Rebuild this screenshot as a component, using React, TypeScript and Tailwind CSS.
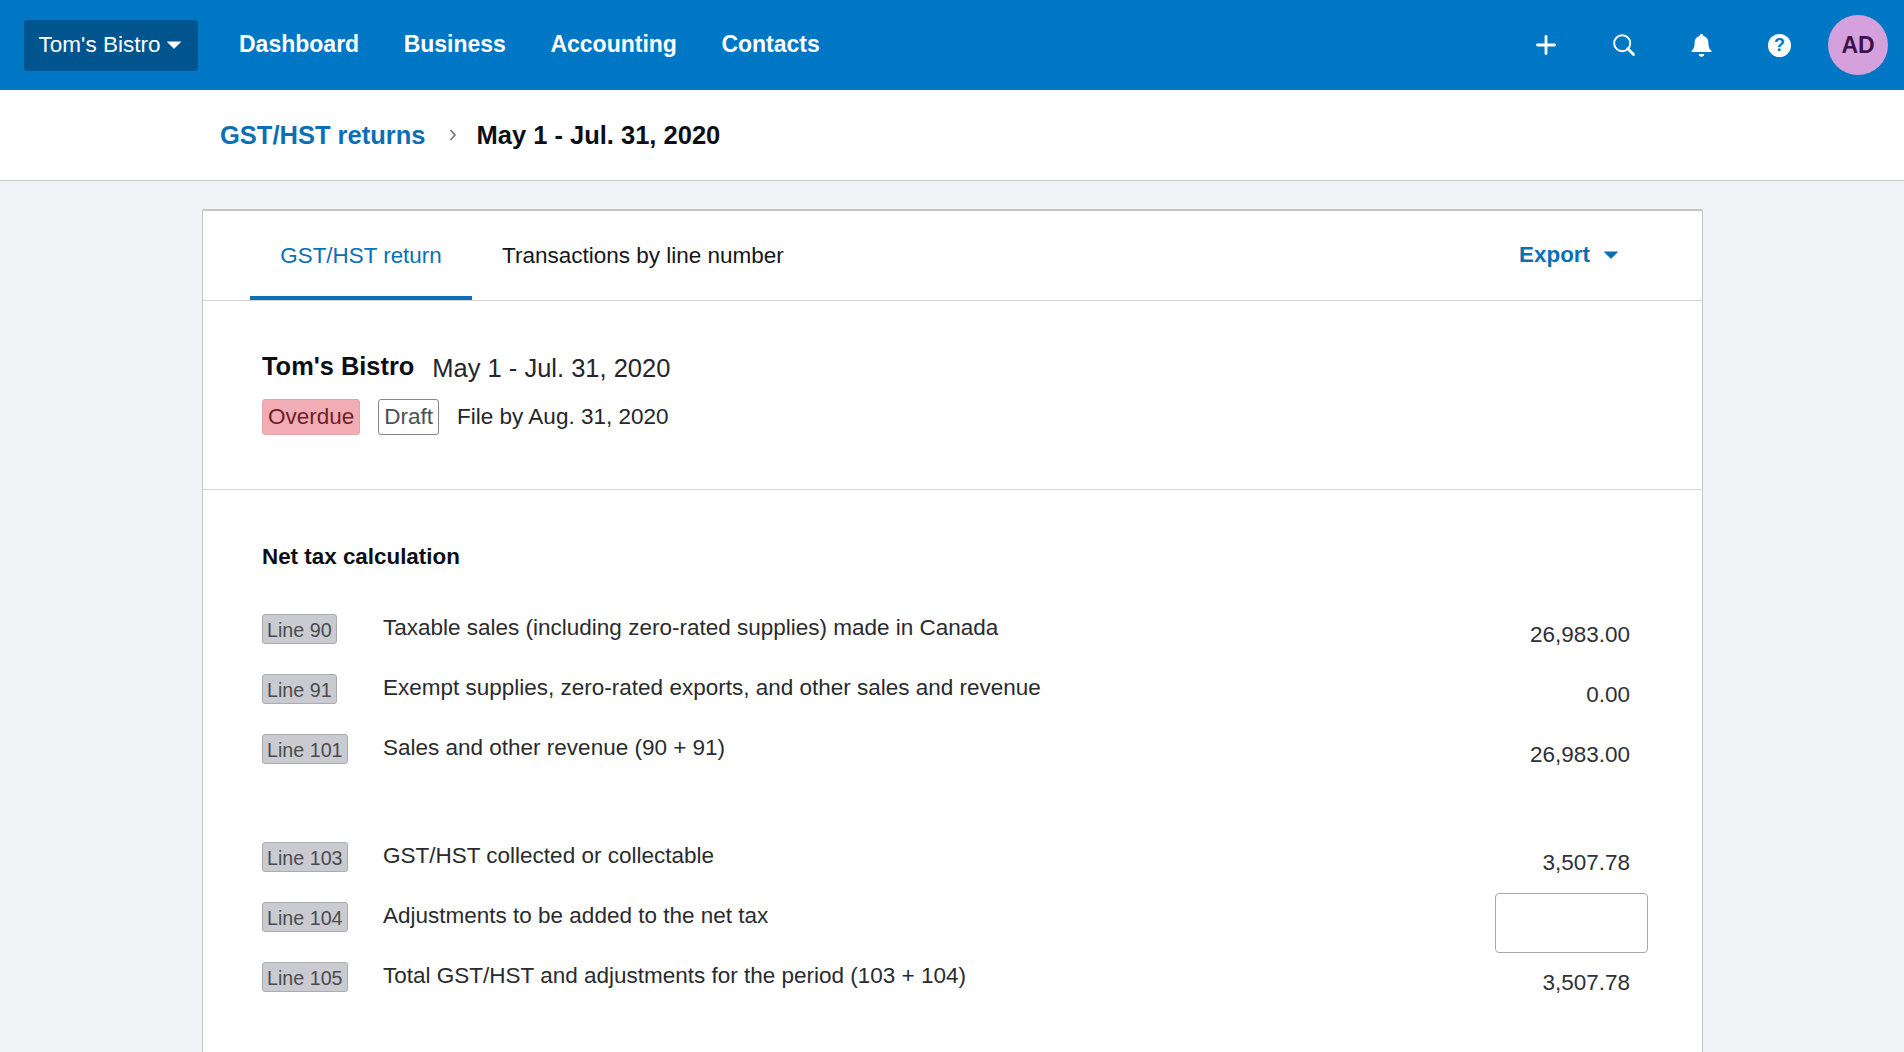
interface TaxLine {
  line: string;
  label: string;
  value?: string;
}

const firstGroup: TaxLine[] = [
  { line: "Line 90", label: "Taxable sales (including zero-rated supplies) made in Canada", value: "26,983.00" },
  { line: "Line 91", label: "Exempt supplies, zero-rated exports, and other sales and revenue", value: "0.00" },
  { line: "Line 101", label: "Sales and other revenue (90 + 91)", value: "26,983.00" },
];

const secondGroup: TaxLine[] = [
  { line: "Line 103", label: "GST/HST collected or collectable", value: "3,507.78" },
  { line: "Line 104", label: "Adjustments to be added to the net tax" },
  { line: "Line 105", label: "Total GST/HST and adjustments for the period (103 + 104)", value: "3,507.78" },
];

function Caret({ className }: { className: string }) {
  return (
    <svg viewBox="0 0 14 8" className={className} fill="currentColor">
      <path d="M0.6 0.5h12.8a0.5 0.5 0 0 1 0.35 0.85L7.4 7.5a0.6 0.6 0 0 1-0.8 0L0.25 1.35A0.5 0.5 0 0 1 0.6 0.5z" />
    </svg>
  );
}

function Row({ item }: { item: TaxLine }) {
  return (
    <div className="flex h-[60px] items-start">
      <div className="w-[121px] shrink-0 pt-[1px]">
        <span className="inline-block h-[30px] rounded-[3px] border border-[#a9abb0] bg-[#c9cbd0] px-[4px] text-[19.7px] leading-[30px] text-[#4a4c50]">
          {item.line}
        </span>
      </div>
      <div className="flex-1 text-[22.5px] leading-[30px] text-[#2a2b2e]">{item.label}</div>
      {item.value ? (
        <div className="pt-[7px] pr-[18px] text-[22.5px] leading-[30px] text-[#2f3033]">{item.value}</div>
      ) : (
        <div className="-mt-[8px] h-[60px] w-[153px] rounded-[4px] border border-[#a8a9ad] bg-white" />
      )}
    </div>
  );
}

export default function App() {
  return (
    <div className="h-[1052px] overflow-hidden bg-[#f2f3f7] font-['Liberation_Sans',Arial,sans-serif]">
      <header className="flex h-[90px] items-center bg-[#0077c5] pl-[24px] pr-[16px] text-white">
        <button className="flex h-[51px] w-[174px] items-center justify-center gap-[7px] rounded-[4px] bg-[#00558f] pr-[2px] text-[22.5px]">
          Tom's Bistro
          <Caret className="h-[8px] w-[14px]" />
        </button>
        <nav className="ml-[41px] flex gap-[44.5px] pb-[2px] text-[23px] font-bold">
          <a>Dashboard</a>
          <a>Business</a>
          <a>Accounting</a>
          <a>Contacts</a>
        </nav>
        <div className="ml-auto flex items-center">
          <svg viewBox="0 0 20 20" className="mr-[57px] h-[20px] w-[20px]" fill="none" stroke="currentColor" strokeWidth="2.8" strokeLinecap="round">
            <path d="M10 1.5v17M1.5 10h17" />
          </svg>
          <svg viewBox="0 0 22 22" className="mr-[56px] h-[22px] w-[22px]" fill="none" stroke="currentColor">
            <circle cx="9.2" cy="9.2" r="8" strokeWidth="1.9" />
            <path d="M14.8 14.8l5.8 5.8" strokeWidth="2.8" strokeLinecap="round" />
          </svg>
          <svg viewBox="0 0 21 23" className="mr-[56px] h-[23px] w-[21px]" fill="currentColor">
            <path d="M10.5 0a2 2 0 0 1 2 1.9c3.4.9 4.9 3.6 4.9 7.1 0 4.3 1.2 6.2 3 7.7.5.5.3 1.3-.5 1.3H1.1c-.8 0-1-.8-.5-1.3 1.8-1.5 3-3.4 3-7.7 0-3.5 1.5-6.2 4.9-7.1a2 2 0 0 1 2-1.9z" />
            <path d="M7.8 20h5.4a2.7 2.7 0 0 1-5.4 0z" />
          </svg>
          <div className="mr-[37px] flex h-[23px] w-[23px] items-center justify-center rounded-full bg-white text-[18px] font-bold leading-none text-[#0077c5]">
            ?
          </div>
          <div className="flex h-[60px] w-[60px] items-center justify-center rounded-full bg-[#d5a1dc] text-[23px] font-bold text-[#3d1149]">
            AD
          </div>
        </div>
      </header>

      <div className="flex h-[91px] items-center border-b border-[#c9cacd] bg-white pl-[220px] text-[25.5px] font-bold">
        <a className="text-[#0a6fb5]">GST/HST returns</a>
        <svg viewBox="0 0 8 12" className="ml-[24px] mr-[19px] h-[12px] w-[8px] text-[#6b6c72]" fill="none" stroke="currentColor" strokeWidth="1.5">
          <path d="M1.5 1l4.5 5-4.5 5" />
        </svg>
        <span className="text-[#0d0f14]">May 1 - Jul. 31, 2020</span>
      </div>

      <main className="ml-[202px] mt-[28px] h-[1000px] w-[1501px] rounded-t-[2px] border-x border-t-2 border-[#c4c5c9] bg-white">
        <div className="flex h-[90px] items-stretch border-b border-[#d4d5d8] pl-[47px] pr-[84px]">
          <div className="flex w-[222px] items-center justify-center border-b-4 border-[#0a6fb5] pt-[5px] text-[22.4px] text-[#0a6fb5]">
            GST/HST return
          </div>
          <div className="ml-[30px] flex items-center text-[22.5px] text-[#14161a]">Transactions by line number</div>
          <div className="ml-auto flex items-center gap-[14px] pb-[2px] text-[22.4px] font-bold text-[#0a6fb5]">
            Export
            <Caret className="h-[8px] w-[14px]" />
          </div>
        </div>

        <section className="h-[189px] border-b border-[#d4d5d8] pl-[59px] pt-[50px]">
          <div className="flex items-start gap-[18px]">
            <h1 className="-mt-[2px] text-[25.4px] font-bold leading-[34px] text-[#0d0f14]">Tom's Bistro</h1>
            <span className="text-[25.5px] leading-[34px] text-[#24262b]">May 1 - Jul. 31, 2020</span>
          </div>
          <div className="mt-[14px] flex items-center text-[22.5px]">
            <span className="h-[36px] rounded-[3px] border border-[#e3a4ab] bg-[#f2adb4] px-[5px] leading-[34px] text-[#6d1f2a]">
              Overdue
            </span>
            <span className="ml-[18px] h-[36px] rounded-[3px] border border-[#85878c] bg-white px-[5px] leading-[34px] text-[#4d4f55]">
              Draft
            </span>
            <span className="ml-[18px] text-[#24262b]">File by Aug. 31, 2020</span>
          </div>
        </section>

        <section className="pl-[59px] pr-[54px] pt-[52px]">
          <h2 className="text-[22.4px] font-bold leading-[30px] text-[#0d0f14]">Net tax calculation</h2>
          <div className="mt-[41px]">
            {firstGroup.map((item) => (
              <Row key={item.line} item={item} />
            ))}
          </div>
          <div className="mt-[48px]">
            {secondGroup.map((item) => (
              <Row key={item.line} item={item} />
            ))}
          </div>
        </section>
      </main>
    </div>
  );
}
